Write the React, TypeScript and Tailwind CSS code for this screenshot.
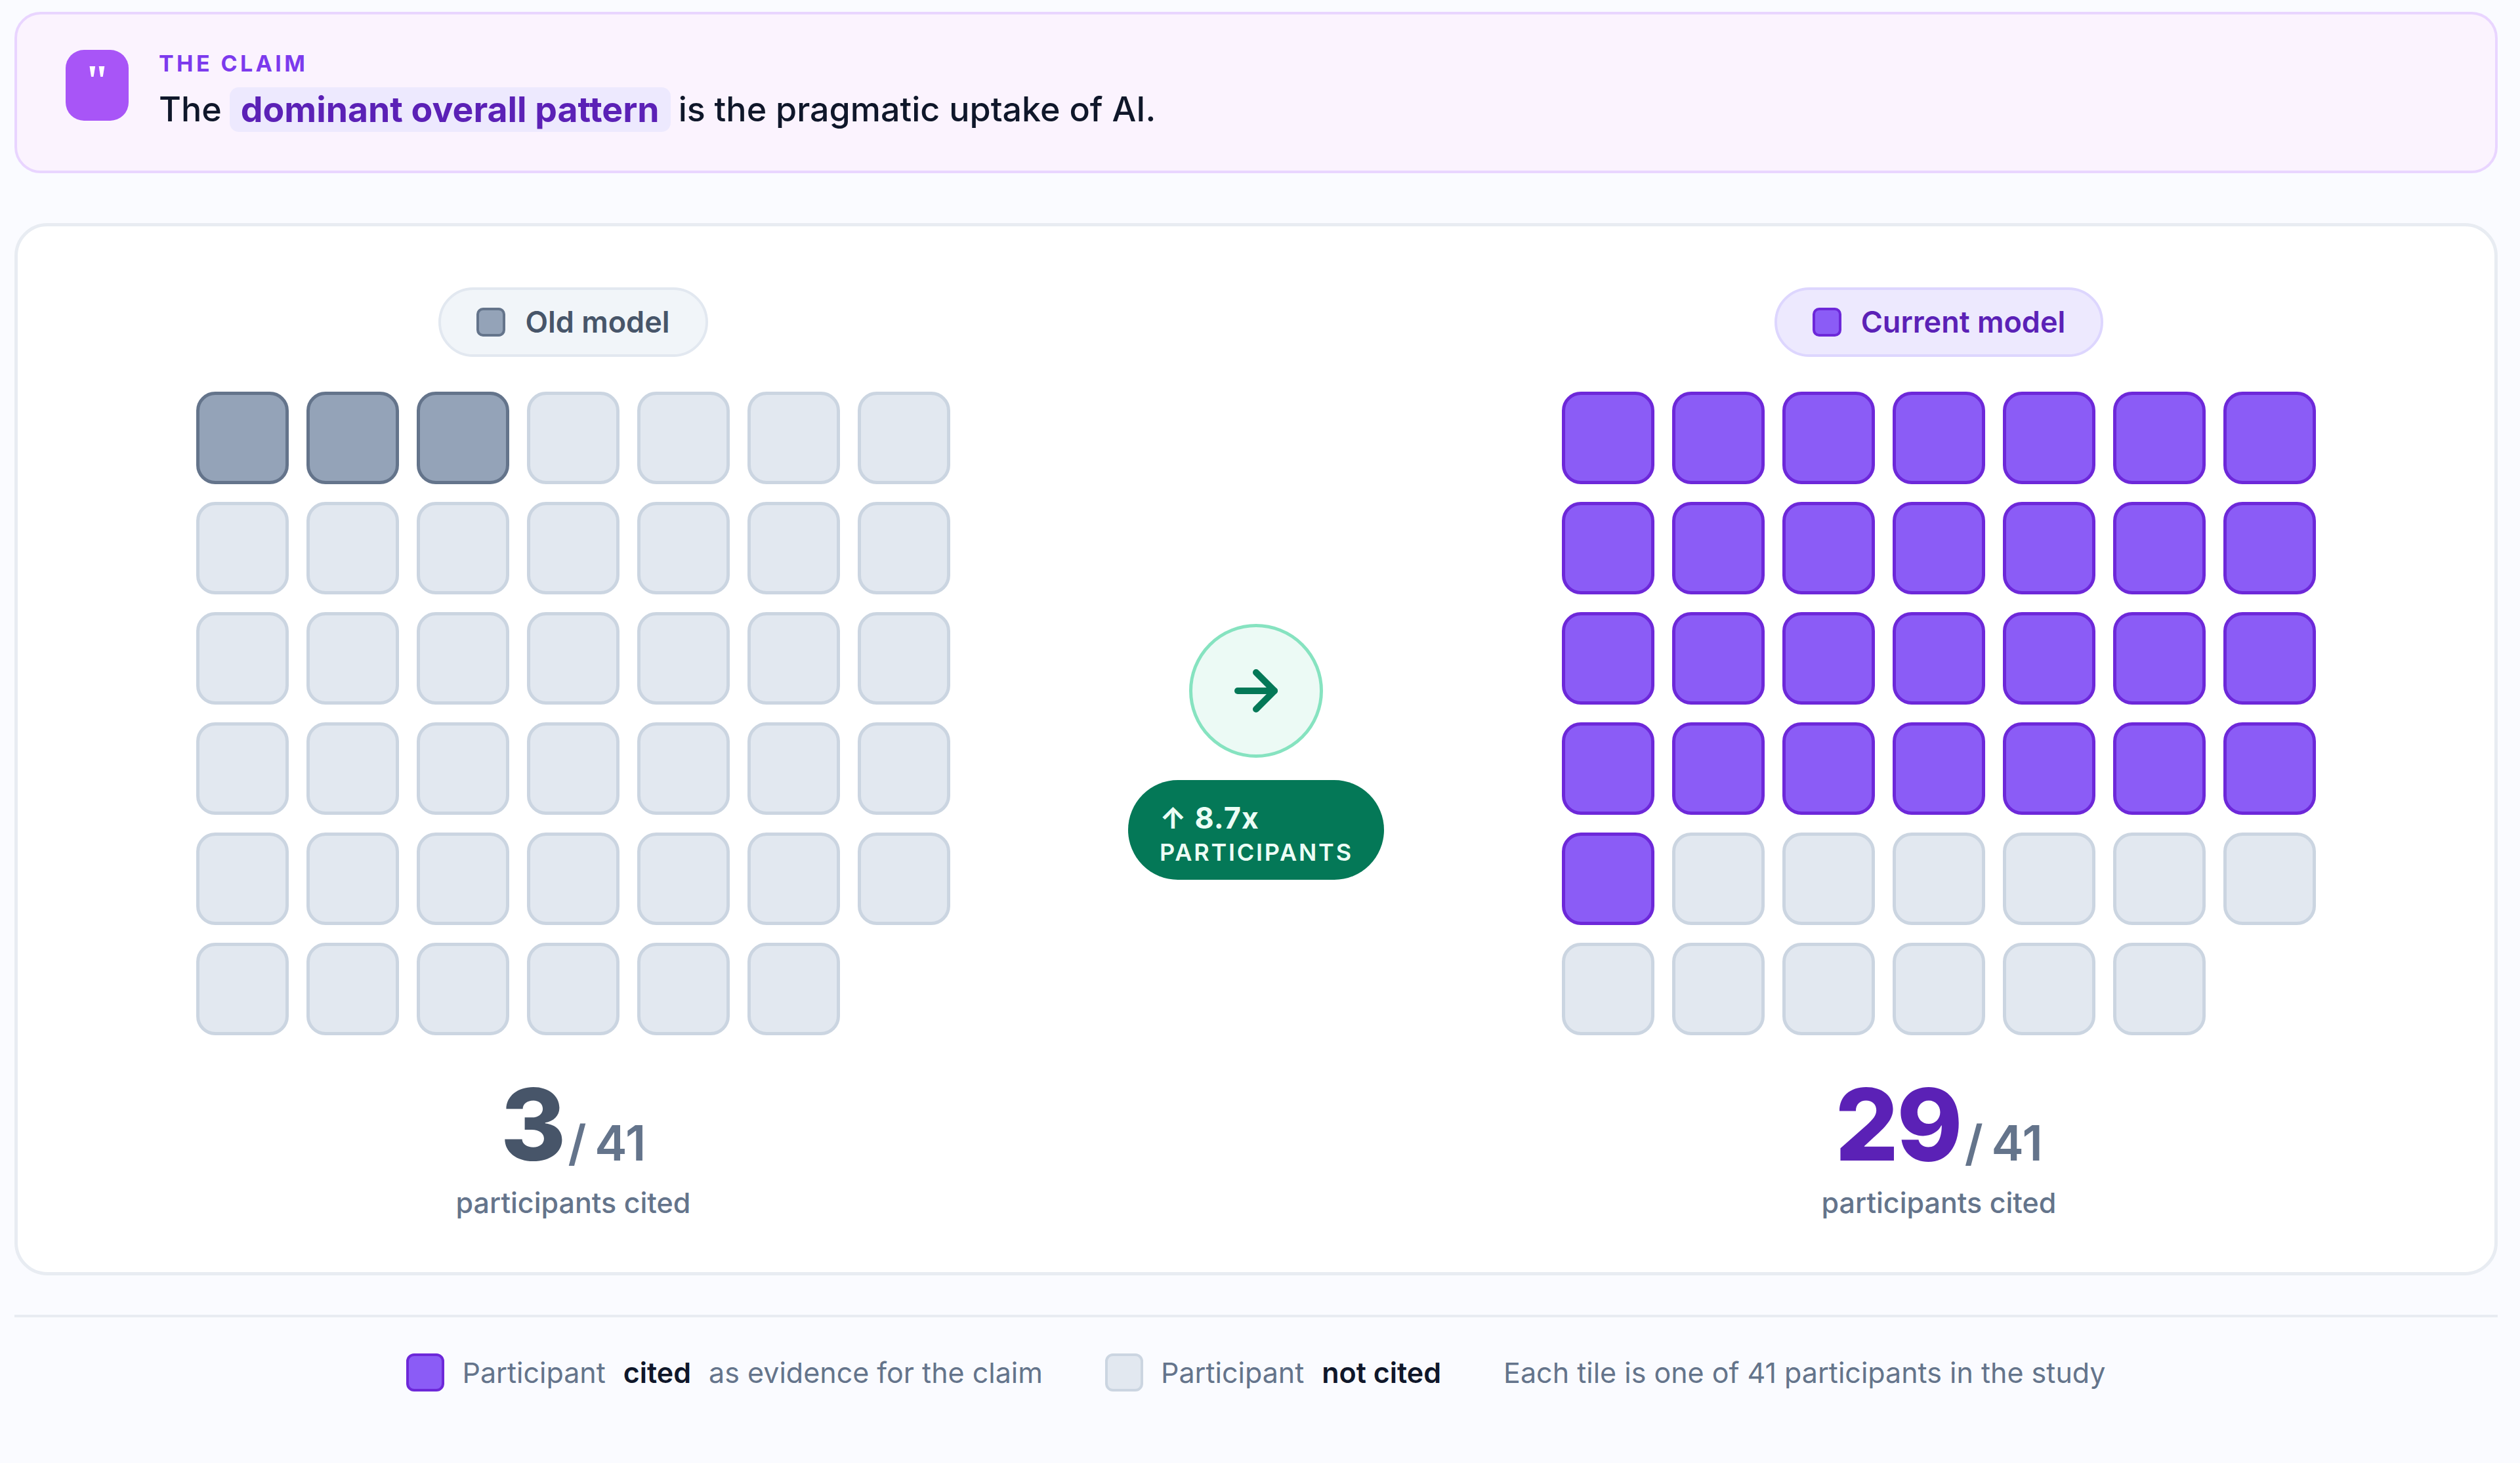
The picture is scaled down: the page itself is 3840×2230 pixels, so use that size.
import React from "react";
import { ArrowRight } from "lucide-react";

type TileKind = "empty" | "old" | "current";

function Tile({ kind }: { kind: TileKind }) {
  if (kind === "old") return <div className="h-[141px] w-[141px] rounded-[29px] border-[5px] border-[#64748b] bg-[#94a3b8]" />;
  if (kind === "current") return <div className="h-[141px] w-[141px] rounded-[29px] border-[5px] border-[#6d28d9] bg-[#8b5cf6]" />;
  return <div className="h-[141px] w-[141px] rounded-[29px] border-[5px] border-[#cbd5e1] bg-[#e2e8f0]" />;
}

function Column({
  label,
  count,
  kind,
}: {
  label: string;
  count: number;
  kind: "old" | "current";
}) {
  const current = kind === "current";
  return (
    <div className="flex w-[1149px] flex-col items-center">
      <div
        className={
          current
            ? "flex h-[106px] items-center gap-[30px] rounded-full border-[4px] border-[#ddd6fe] bg-[#ede9fe] px-[54px]"
            : "flex h-[106px] items-center gap-[30px] rounded-full border-[4px] border-[#e2e8f0] bg-[#f1f5f9] px-[54px]"
        }
      >
        <span
          className={
            current
              ? "h-[44px] w-[44px] rounded-[10px] border-[4px] border-[#6d28d9] bg-[#8b5cf6]"
              : "h-[44px] w-[44px] rounded-[10px] border-[4px] border-[#64748b] bg-[#94a3b8]"
          }
        />
        <span className={current ? "text-[45px] font-semibold text-[#5b21b6]" : "text-[45px] font-semibold text-[#475569]"}>{label}</span>
      </div>
      <div className="mt-[53px] grid grid-cols-7 gap-[27px]">
        {Array.from({ length: 41 }, (_, i) => (
          <Tile key={i} kind={i < count ? kind : "empty"} />
        ))}
      </div>
      <div className="mt-[60px] flex items-baseline gap-[6px]">
        <span className={current ? "text-[152px] leading-[1] font-extrabold tracking-[-3px] text-[#5b21b6]" : "text-[152px] leading-[1] font-extrabold tracking-[-3px] text-[#475569]"}>{count}</span>
        <span className="text-[74px] leading-[1] font-semibold [word-spacing:-6px] text-[#64748b]">/ 41</span>
      </div>
      <div className="mt-[13px] text-[43px] leading-[60px] font-medium text-[#64748b]">participants cited</div>
    </div>
  );
}

export default function App() {
  return (
    <div className="flex h-[2230px] w-[3840px] flex-col bg-[#fafbff] pt-[18px] pr-[34px] pl-[22px] font-['Inter','Noto_Sans',sans-serif]">
      <div className="flex h-[246px] gap-[46px] rounded-[40px] border-[4px] border-[#e9d5ff] bg-[#fbf3fe] pt-[54px] pl-[74px]">
        <div className="flex h-[108px] w-[96px] shrink-0 justify-center rounded-[28px] bg-[#a855f7] pt-[12px] font-['Liberation_Serif',serif] text-[68px] leading-[1] font-bold text-white">
          "
        </div>
        <div className="flex flex-col">
          <div className="text-[34px] leading-[42px] font-bold tracking-[4.4px] text-[#7c3aed]">THE CLAIM</div>
          <div className="mt-[10px] flex items-center gap-[12px] text-[52px] font-medium text-[#0f172a]">
            <span>The</span>
            <span className="rounded-[14px] bg-[#ede9fe] px-[17px] text-[53.5px] leading-[68px] font-bold text-[#5b21b6]">dominant overall pattern</span>
            <span>is the pragmatic uptake of AI.</span>
          </div>
        </div>
      </div>
      <div className="mt-[76px] flex h-[1604px] shrink-0 items-center justify-center gap-[271px] rounded-[50px] border-[5px] border-[#e8ecf2] bg-white pt-[17px]">
        <Column label="Old model" count={3} kind="old" />
        <div className="mb-[10px] flex w-[390px] shrink-0 flex-col items-center">
          <div className="flex h-[204px] w-[204px] items-center justify-center rounded-full border-[5px] border-[#86e3c0] bg-[#ecfaf5]">
            <ArrowRight size={96} strokeWidth={2.5} className="text-[#047857]" />
          </div>
          <div className="mt-[34px] flex h-[152px] w-[390px] flex-col justify-center rounded-full bg-[#047857] pt-[12px] pl-[48px] text-[#ecfdf5]">
            <div className="text-[45px] leading-[56px] font-bold tracking-[1px]">↑ 8.7x</div>
            <div className="text-[36px] leading-[48px] font-semibold tracking-[2.8px]">PARTICIPANTS</div>
          </div>
        </div>
        <Column label="Current model" count={29} kind="current" />
      </div>
      <div className="mt-[60px] h-[4px] bg-[#e8ecf2]" />
      <div className="mt-[52px] flex items-center justify-center gap-[95px] text-[43px] text-[#64748b]">
        <div className="flex items-center gap-[27px]">
          <span className="h-[58px] w-[58px] rounded-[12px] border-[4px] border-[#6d28d9] bg-[#8b5cf6]" />
          <span>Participant</span>
          <b className="font-semibold text-[#0f172a]">cited</b>
          <span>as evidence for the claim</span>
        </div>
        <div className="flex items-center gap-[27px]">
          <span className="h-[58px] w-[58px] rounded-[12px] border-[4px] border-[#cbd5e1] bg-[#e2e8f0]" />
          <span>Participant</span>
          <b className="font-semibold text-[#0f172a]">not cited</b>
        </div>
        <span>Each tile is one of 41 participants in the study</span>
      </div>
    </div>
  );
}
